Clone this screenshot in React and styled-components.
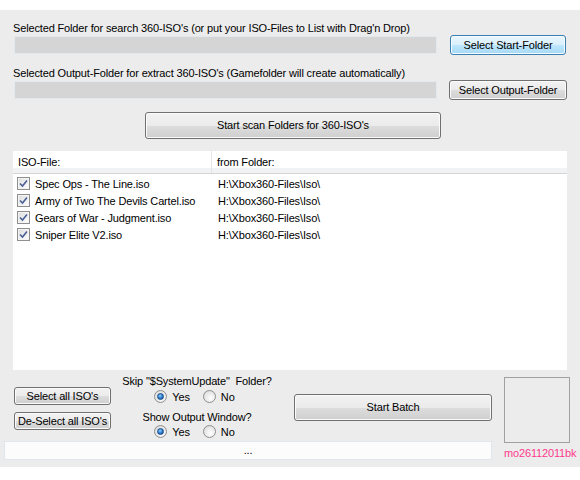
import React from 'react'
import styled, { createGlobalStyle, css } from 'styled-components'

const Global = createGlobalStyle`
  html, body {
    margin: 0;
    padding: 0;
    background: #ffffff;
  }
  body {
    font-family: "Liberation Sans", Arial, sans-serif;
    font-size: 11px;
    letter-spacing: -0.15px;
    color: #000;
  }
`;

const Window = styled.div`
  margin-top: 10px;
  height: 457px;
  background: #ececec;
  display: flex;
  flex-direction: column;
  box-sizing: border-box;
  padding-top: 12px;
`;

const Top = styled.div`
  padding-left: 13px;
  display: flex;
  flex-direction: column;
`;

const Label = styled.div`
  height: 13px;
  line-height: 13px;
  white-space: nowrap;
  margin-top: ${p => p.$mt || 0}px;
`;

const FieldRow = styled.div`
  display: flex;
  align-items: center;
  height: 20px;
`;

const PathBox = styled.div`
  margin-left: 1px;
  width: 423px;
  height: 18px;
  box-sizing: border-box;
  background: #d5d5d5;
  border: 1px solid #e4e9ee;
`;

const Button = styled.button`
  font-family: inherit;
  font-size: 11px;
  letter-spacing: -0.15px;
  color: #000;
  padding: 0;
  box-sizing: border-box;
  width: ${p => p.$w}px;
  height: ${p => p.$h}px;
  margin-left: ${p => p.$ml || 0}px;
  margin-top: ${p => p.$mt || 0}px;
  flex-shrink: 0;
  border: 1px solid #707070;
  border-radius: 3px;
  background: linear-gradient(#f2f2f2 0%, #ebebeb 50%, #dddddd 51%, #cfcfcf 100%);
  box-shadow: inset 0 0 0 1px #fbfbfb;
  line-height: 1;
  ${p => p.$hot && css`
    border-color: #3c7fb1;
    background: linear-gradient(#eaf6fd 0%, #d9f0fc 50%, #bee6fd 51%, #a7d9f5 100%);
    box-shadow: inset 0 0 0 1px #f4fbff;
  `}
`;

const ListView = styled.div`
  margin-top: 12px;
  width: 554px;
  height: 219px;
  background: #ffffff;
  display: flex;
  flex-direction: column;
`;

const Header = styled.div`
  display: flex;
  height: 23px;
  box-sizing: border-box;
  background: linear-gradient(#ffffff 0, #ffffff 17px, #f1f2f4 17px, #f1f2f4 100%);
  border-bottom: 1px solid #d5d5d5;
`;

const HeadCell = styled.div`
  width: ${p => p.$w ? `${p.$w}px` : 'auto'};
  flex: ${p => p.$w ? 'none' : 1};
  box-sizing: border-box;
  padding-left: ${p => p.$pl}px;
  line-height: 23px;
  border-right: ${p => p.$div ? '1px solid #e3e5e8' : 'none'};
`;

const Rows = styled.div`
  padding-top: 1px;
`;

const Row = styled.div`
  display: flex;
  align-items: center;
  height: 17px;
`;

const FileCell = styled.div`
  width: 199px;
  box-sizing: border-box;
  flex-shrink: 0;
  display: flex;
  align-items: center;
  padding-left: 4px;
  gap: 5px;
  white-space: nowrap;
`;

const FolderCell = styled.div`
  padding-left: 6px;
  white-space: nowrap;
`;

const CheckBox = styled.span`
  width: 13px;
  height: 13px;
  box-sizing: border-box;
  border: 1px solid #8f8f8f;
  background: linear-gradient(135deg, #dcdcdc, #ffffff);
  box-shadow: inset 0 0 0 1px #f4f4f4;
  display: inline-flex;
  align-items: center;
  justify-content: center;
`;

const Bottom = styled.div`
  display: flex;
  padding-left: 4px;
`;

const LeftBlock = styled.div`
  width: 488px;
  display: flex;
  flex-direction: column;
`;

const Controls = styled.div`
  height: 71px;
  display: flex;
  align-items: flex-start;
  padding-left: 10px;
`;

const ButtonCol = styled.div`
  display: flex;
  flex-direction: column;
  padding-top: 17px;
  gap: 7px;
`;

const RadioGroup = styled.div`
  width: 160px;
  margin-left: 6px;
  padding-top: 5px;
  display: flex;
  flex-direction: column;
  align-items: center;
`;

const Question = styled.div`
  height: 13px;
  line-height: 13px;
  white-space: pre;
  margin-top: ${p => p.$mt || 0}px;
`;

const RadioRow = styled.div`
  display: flex;
  align-items: center;
  height: 13px;
  margin-top: ${p => p.$mt || 0}px;
  margin-left: -5px;
`;

const RadioItem = styled.label`
  display: flex;
  align-items: center;
  gap: 5px;
  margin-right: ${p => p.$mr || 0}px;
`;

const Radio = styled.span`
  width: 13px;
  height: 13px;
  box-sizing: border-box;
  border-radius: 50%;
  border: 1px solid #8e8f8f;
  background: radial-gradient(circle at 60% 65%, #ffffff 0%, #e6e6e6 60%, #cfcfcf 100%);
  display: inline-flex;
  align-items: center;
  justify-content: center;
  &::after {
    content: '';
    display: ${p => p.$on ? 'block' : 'none'};
    width: 5px;
    height: 5px;
    border-radius: 50%;
    background: radial-gradient(circle at 40% 35%, #8ad0ff 0%, #2a79c8 55%, #0d3f86 100%);
    border: 1px solid #1a4c8a;
  }
`;

const StatusBar = styled.div`
  height: 19px;
  box-sizing: border-box;
  background: #fcfcfc;
  border: 1px solid #e0e6ec;
  text-align: center;
  line-height: 17px;
`;

const RightBlock = styled.div`
  margin-left: 12px;
  padding-top: 7px;
  display: flex;
  flex-direction: column;
`;

const PictureBox = styled.div`
  width: 66px;
  height: 66px;
  box-sizing: border-box;
  border: 1px solid #a0a0a0;
`;

const Signature = styled.div`
  margin-top: 4px;
  color: #ff3a8c;
  line-height: 13px;
  white-space: nowrap;
`;

const files = [
  'Spec Ops - The Line.iso',
  'Army of Two The Devils Cartel.iso',
  'Gears of War - Judgment.iso',
  'Sniper Elite V2.iso',
];

const Check = () => (
  <CheckBox>
    <svg width="9" height="9" viewBox="0 0 9 9">
      <path d="M1 4.5 L3.5 7 L8 1.5" fill="none" stroke="#4a5f97" strokeWidth="1.6" />
    </svg>
  </CheckBox>
);

const YesNo = ({ mt }) => (
  <RadioRow $mt={mt}>
    <RadioItem $mr={13}><Radio $on />Yes</RadioItem>
    <RadioItem><Radio />No</RadioItem>
  </RadioRow>
);

export default function App() {
  return (
    <>
      <Global />
      <Window>
        <Top>
          <Label>Selected Folder for search 360-ISO's (or put your ISO-Files to List with Drag'n Drop)</Label>
          <FieldRow>
            <PathBox />
            <Button $w={116} $h={20} $ml={13} $hot>Select Start-Folder</Button>
          </FieldRow>
          <Label $mt={12}>Selected Output-Folder for extract 360-ISO's (Gamefolder will create automatically)</Label>
          <FieldRow>
            <PathBox />
            <Button $w={118} $h={20} $ml={12}>Select Output-Folder</Button>
          </FieldRow>
          <Button $w={296} $h={27} $ml={132} $mt={12}>Start scan Folders for 360-ISO's</Button>
          <ListView>
            <Header>
              <HeadCell $w={199} $pl={5} $div>ISO-File:</HeadCell>
              <HeadCell $pl={5}>from Folder:</HeadCell>
            </Header>
            <Rows>
              {files.map(f => (
                <Row key={f}>
                  <FileCell><Check />{f}</FileCell>
                  <FolderCell>H:\Xbox360-Files\Iso\</FolderCell>
                </Row>
              ))}
            </Rows>
          </ListView>
        </Top>
        <Bottom>
          <LeftBlock>
            <Controls>
              <ButtonCol>
                <Button $w={97} $h={18}>Select all ISO's</Button>
                <Button $w={97} $h={18}>De-Select all ISO's</Button>
              </ButtonCol>
              <RadioGroup>
                <Question>Skip "$SystemUpdate"  Folder?</Question>
                <YesNo mt={2} />
                <Question $mt={8}>Show Output Window?</Question>
                <YesNo mt={1} />
              </RadioGroup>
              <Button $w={198} $h={27} $ml={17} $mt={24}>Start Batch</Button>
            </Controls>
            <StatusBar>...</StatusBar>
          </LeftBlock>
          <RightBlock>
            <PictureBox />
            <Signature>mo26112011bk</Signature>
          </RightBlock>
        </Bottom>
      </Window>
    </>
  )
}
